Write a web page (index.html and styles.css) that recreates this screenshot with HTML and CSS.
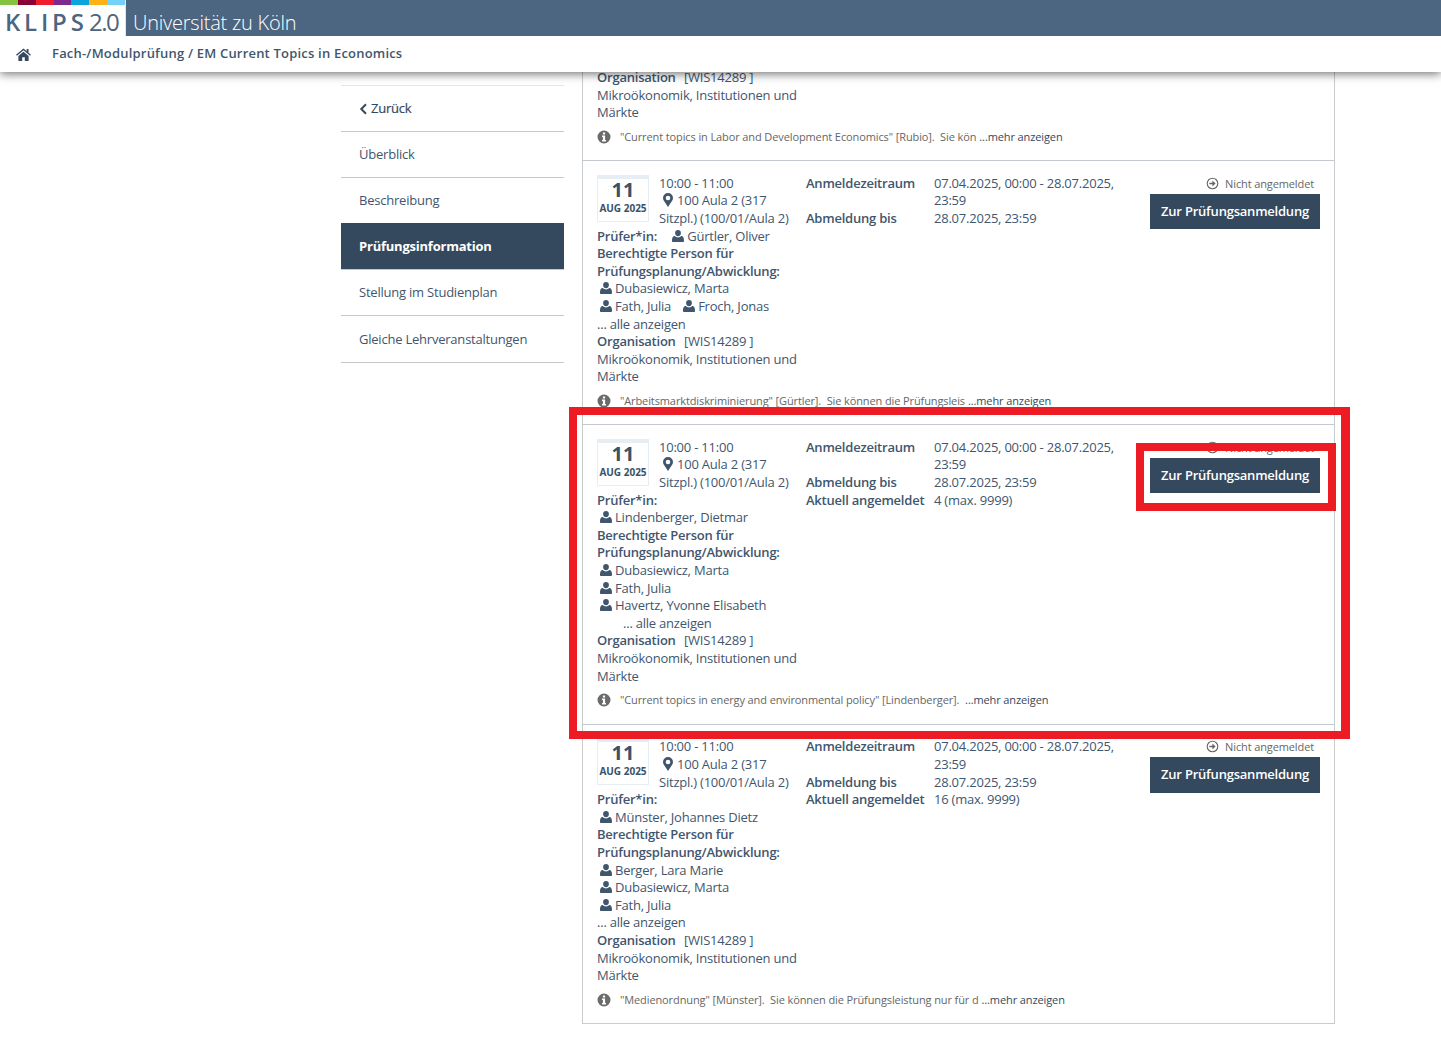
FILE: index.html
```html
<!DOCTYPE html>
<html lang="de">
<head>
<meta charset="utf-8">
<title>Fach-/Modulprüfung</title>
<link rel="stylesheet" href="styles.css">
</head>
<body>
<svg class="defs" aria-hidden="true">
  <symbol id="i-user" viewBox="0 0 12 12"><ellipse cx="6" cy="3.100" rx="2.900" ry="3.100"/><path d="M1 12c-.6 0-1-.4-1-1 0-2.400.6-4.900 2.700-4.900.8.800 2 1.300 3.300 1.300s2.500-.5 3.300-1.300c2.100 0 2.700 2.500 2.700 4.900 0 .6-.4 1-1 1z"/></symbol>
  <symbol id="i-marker" viewBox="0 0 10 14"><path fill-rule="evenodd" d="M5 0A5 5 0 0 0 0 5c0 1 .3 1.600.7 2.400L5 14l4.300-6.600c.4-.8.7-1.400.7-2.400a5 5 0 0 0-5-5zm0 7.300a2.300 2.300 0 1 1 0-4.600 2.300 2.300 0 0 1 0 4.600z"/></symbol>
  <symbol id="i-info" viewBox="0 0 14 14"><path fill-rule="evenodd" d="M7 .5a6.500 6.500 0 1 0 0 13 6.500 6.500 0 0 0 0-13zM5.900 2.600h2.200v1.900H5.900zM5 5.600h3.100v4.500h.9v1.400H5v-1.400h.9V7H5z"/></symbol>
  <symbol id="i-go" viewBox="0 0 14 14"><circle cx="7" cy="7" r="5.700" fill="none" stroke="currentColor" stroke-width="1.200"/><path d="M3.600 6.100h3.300V3.900L10.300 7 6.900 10.100V7.900H3.600z"/></symbol>
</svg>

<header class="top">
  <div class="brandbar">
    <div class="logo">
      <div class="stripes"><i class="s1"></i><i class="s2"></i><i class="s3"></i><i class="s4"></i><i class="s5"></i><i class="s6"></i><i class="s7"></i></div>
      <div class="logotext"><span class="klips">KLIPS</span><span class="ver">2.0</span></div>
    </div>
    <div class="uni">Universität zu Köln</div>
  </div>
  <div class="crumb">
    <svg class="home" viewBox="0 0 16 14"><path d="M8 .6 0 7.300l.9 1.100L8 2.500l7.100 5.900.9-1.100-2.600-2.200V1.200h-2v2.400zM2.500 8.600V14h4.100V9.900h2.800V14h4.100V8.600L8 4z"/></svg>
    <span class="crumbtext">Fach-/Modulprüfung / EM Current Topics in Economics</span>
  </div>
</header>

<div class="layout">
  <nav class="side">
    <a class="navitem back"><svg class="chev" viewBox="0 0 8 12"><path d="M6.300.6 7.700 2 3.700 6l4 4-1.400 1.400L.9 6z"/></svg>Zurück</a>
    <a class="navitem">Überblick</a>
    <a class="navitem">Beschreibung</a>
    <a class="navitem active">Prüfungsinformation</a>
    <a class="navitem">Stellung im Studienplan</a>
    <a class="navitem">Gleiche Lehrveranstaltungen</a>
  </nav>

  <main class="card">
    <section class="row rowclipped">
      <div class="left">
        <div><b class="org">Organisation</b> &nbsp;[WIS14289 ]</div>
        <div>Mikroökonomik, Institutionen und Märkte</div>
      </div>
      <p class="note"><svg class="ic-info"><use href="#i-info"/></svg><span>"Current topics in Labor and Development Economics" [Rubio]. &nbsp;Sie kön</span> <a>...mehr anzeigen</a></p>
    </section>

    <section class="row">
      <div class="cols">
        <div class="left">
          <div class="date"><strong>11</strong><small>AUG 2025</small></div>
          <div class="timeplace">10:00 - 11:00<br><svg class="ic-marker"><use href="#i-marker"/></svg>100 Aula 2 (317 Sitzpl.) (100/01/Aula 2)</div>
          <div><b class="examiner">Prüfer*in:</b> <span class="person gap"><svg class="ic-user"><use href="#i-user"/></svg>Gürtler, Oliver</span></div>
          <div><b>Berechtigte Person für Prüfungsplanung/Abwicklung:</b></div>
          <div><span class="person"><svg class="ic-user"><use href="#i-user"/></svg>Dubasiewicz, Marta</span></div>
          <div><span class="person"><svg class="ic-user"><use href="#i-user"/></svg>Fath, Julia</span><span class="person gap"><svg class="ic-user"><use href="#i-user"/></svg>Froch, Jonas</span></div>
          <div>... alle anzeigen</div>
          <div><b class="org">Organisation</b> &nbsp;[WIS14289 ]</div>
          <div>Mikroökonomik, Institutionen und Märkte</div>
        </div>
        <dl class="mid">
          <dt>Anmeldezeitraum</dt><dd>07.04.2025, 00:00 - 28.07.2025, 23:59</dd>
          <dt>Abmeldung bis</dt><dd>28.07.2025, 23:59</dd>
        </dl>
        <div class="right">
          <div class="status"><svg class="ic-go"><use href="#i-go"/></svg>Nicht angemeldet</div>
          <a class="btn">Zur Prüfungsanmeldung</a>
        </div>
      </div>
      <p class="note"><svg class="ic-info"><use href="#i-info"/></svg><span>"Arbeitsmarktdiskriminierung" [Gürtler]. &nbsp;Sie können die Prüfungsleis</span> <a>...mehr anzeigen</a></p>
    </section>

    <section class="row marked">
      <div class="cols">
        <div class="left">
          <div class="date"><strong>11</strong><small>AUG 2025</small></div>
          <div class="timeplace">10:00 - 11:00<br><svg class="ic-marker"><use href="#i-marker"/></svg>100 Aula 2 (317 Sitzpl.) (100/01/Aula 2)</div>
          <div><b>Prüfer*in:</b></div>
          <div><span class="person"><svg class="ic-user"><use href="#i-user"/></svg>Lindenberger, Dietmar</span></div>
          <div><b>Berechtigte Person für Prüfungsplanung/Abwicklung:</b></div>
          <div><span class="person"><svg class="ic-user"><use href="#i-user"/></svg>Dubasiewicz, Marta</span></div>
          <div><span class="person"><svg class="ic-user"><use href="#i-user"/></svg>Fath, Julia</span></div>
          <div><span class="person"><svg class="ic-user"><use href="#i-user"/></svg>Havertz, Yvonne Elisabeth</span></div>
          <div class="indent">... alle anzeigen</div>
          <div><b class="org">Organisation</b> &nbsp;[WIS14289 ]</div>
          <div>Mikroökonomik, Institutionen und Märkte</div>
        </div>
        <dl class="mid">
          <dt>Anmeldezeitraum</dt><dd>07.04.2025, 00:00 - 28.07.2025, 23:59</dd>
          <dt>Abmeldung bis</dt><dd>28.07.2025, 23:59</dd>
          <dt>Aktuell angemeldet</dt><dd>4 (max. 9999)</dd>
        </dl>
        <div class="right">
          <div class="status"><svg class="ic-go"><use href="#i-go"/></svg>Nicht angemeldet</div>
          <a class="btn btn-marked">Zur Prüfungsanmeldung</a>
        </div>
      </div>
      <p class="note"><svg class="ic-info"><use href="#i-info"/></svg><span>"Current topics in energy and environmental policy" [Lindenberger]. </span> <a>...mehr anzeigen</a></p>
    </section>

    <section class="row lastrow">
      <div class="cols">
        <div class="left">
          <div class="date"><strong>11</strong><small>AUG 2025</small></div>
          <div class="timeplace">10:00 - 11:00<br><svg class="ic-marker"><use href="#i-marker"/></svg>100 Aula 2 (317 Sitzpl.) (100/01/Aula 2)</div>
          <div><b>Prüfer*in:</b></div>
          <div><span class="person"><svg class="ic-user"><use href="#i-user"/></svg>Münster, Johannes Dietz</span></div>
          <div><b>Berechtigte Person für Prüfungsplanung/Abwicklung:</b></div>
          <div><span class="person"><svg class="ic-user"><use href="#i-user"/></svg>Berger, Lara Marie</span></div>
          <div><span class="person"><svg class="ic-user"><use href="#i-user"/></svg>Dubasiewicz, Marta</span></div>
          <div><span class="person"><svg class="ic-user"><use href="#i-user"/></svg>Fath, Julia</span></div>
          <div>... alle anzeigen</div>
          <div><b class="org">Organisation</b> &nbsp;[WIS14289 ]</div>
          <div>Mikroökonomik, Institutionen und Märkte</div>
        </div>
        <dl class="mid">
          <dt>Anmeldezeitraum</dt><dd>07.04.2025, 00:00 - 28.07.2025, 23:59</dd>
          <dt>Abmeldung bis</dt><dd>28.07.2025, 23:59</dd>
          <dt>Aktuell angemeldet</dt><dd>16 (max. 9999)</dd>
        </dl>
        <div class="right">
          <div class="status"><svg class="ic-go"><use href="#i-go"/></svg>Nicht angemeldet</div>
          <a class="btn">Zur Prüfungsanmeldung</a>
        </div>
      </div>
      <p class="note"><svg class="ic-info"><use href="#i-info"/></svg><span>"Medienordnung" [Münster]. &nbsp;Sie können die Prüfungsleistung nur für d</span> <a>...mehr anzeigen</a></p>
    </section>
  </main>
</div>
</body>
</html>
```

FILE: styles.css
```css
* { box-sizing: border-box; }
html, body { margin: 0; padding: 0; background: #fff; }
body {
  font-family: "Open Sans", sans-serif;
  font-size: 13px;
  line-height: 17.6px;
  letter-spacing: -.22px;
  color: #3f566e;
  min-height: 1039px;
}
.defs { display: none; }
svg { fill: currentColor; }

/* header */
.top {
  position: relative;
  z-index: 5;
  height: 72px;
  background: #fff;
  box-shadow: 0 2px 9px rgba(0, 0, 0, .55);
}
.brandbar {
  height: 36px;
  background: #4c6580;
  display: flex;
  align-items: stretch;
}
.logo {
  width: 126px;
  background: #fff;
  border-right: 1px solid #dfe6ec;
  display: flex;
  flex-direction: column;
}
.stripes { display: flex; height: 5px; flex: none; }
.stripes i { flex: 1; }
.s1 { background: #84c341; }
.s2 { background: #8a0034; }
.s3 { background: #ee1c2e; }
.s4 { background: #7d2a90; }
.s5 { background: #0aa5dd; }
.s6 { background: #fdb216; }
.s7 { background: #73d2f7; }
.logotext {
  display: flex;
  align-items: baseline;
  padding: 3px 0 0 5px;
  color: #4c6580;
  font-size: 24px;
  line-height: 28px;
  white-space: nowrap;
}
.klips {
  width: 84px;
  flex: none;
  font-weight: 600;
  letter-spacing: 3.800px;
}
.ver {
  font-weight: 400;
  letter-spacing: -1.500px;
}
.uni {
  color: #fff;
  font-size: 20px;
  font-weight: 300;
  line-height: 26px;
  padding: 10px 0 0 7px;
  white-space: nowrap;
}
.crumb {
  height: 36px;
  display: flex;
  align-items: center;
  padding-left: 16px;
}
.home { width: 15px; height: 13px; color: #34495e; margin-right: 21px; }
.crumbtext { font-weight: 600; letter-spacing: .2px; }

/* layout */
.layout {
  display: flex;
  align-items: flex-start;
  gap: 18px;
  padding-left: 341px;
  margin-top: -3px;
}
.side {
  width: 223px;
  margin-top: 16px;
  border-top: 1px solid #e6e6e6;
}
.navitem {
  display: flex;
  align-items: center;
  height: 46px;
  padding-left: 18px;
  border-bottom: 1px solid #c8c8c8;
  white-space: nowrap;
}
.navitem:last-child { height: 47px; padding-top: 2px; }
.back { color: #34495e; -webkit-text-stroke: .2px #34495e; }
.chev { width: 8px; height: 12px; margin-right: 4px; color: #34495e; }
.active {
  height: 47px;
  margin-top: -1px;
  padding-top: 1px;
  background: #34495e;
  color: #fff;
  font-weight: 700;
}

/* card */
.card {
  width: 753px;
  border: 1px solid #c8ccd0;
  border-top: 0;
}
.row {
  padding: 13.900px 14px 0;
  border-bottom: 1px solid #c3c9cf;
  height: 264px;
}
.rowclipped { padding-top: 0; height: 92px; }
.rowclipped .left { width: 209px; }
.marked { height: 300px; position: relative; }
.lastrow { height: 298px; border-bottom: 0; padding-top: 13.400px; }
.marked::after {
  content: "";
  position: absolute;
  inset: -18px -16px -15px -14px;
  border: 8px solid #ed1c24;
  border-right-width: 9px;
  pointer-events: none;
  z-index: 2;
}
.cols { display: flex; }
.left { width: 209px; flex: none; }
.left b, dt { font-weight: 600; }
.org { margin-right: 2px; }
.date {
  float: left;
  width: 52px;
  height: 47px;
  margin-right: 10px;
  border: 1px solid #e6edf3;
  border-top: 4px solid #e6edf3;
  text-align: center;
  color: #3b5168;
  letter-spacing: 0;
}
.date strong { display: block; font-size: 20px; line-height: 22px; font-weight: 700; }
.date small { display: block; font-size: 10px; line-height: 15px; font-weight: 700; white-space: nowrap; margin: 0 -2px; }
.timeplace { min-height: 52.800px; }
.ic-marker { width: 10px; height: 14px; margin: 0 4px; vertical-align: -2px; }
.ic-user { width: 12px; height: 12px; margin: 0 3px; vertical-align: -1px; }
.person { white-space: nowrap; }
.gap { margin-left: 9px; }
.indent { padding-left: 26px; }
.mid {
  flex: none;
  width: 330px;
  margin: 0;
  display: grid;
  grid-template-columns: 128px 190px;
  align-content: start;
}
dd { margin: 0; }
.right {
  flex: 1;
  display: flex;
  flex-direction: column;
  align-items: flex-end;
}
.status {
  font-size: 11px;
  line-height: 17.600px;
  letter-spacing: -.12px;
  color: #666;
  padding-right: 6px;
  white-space: nowrap;
}
.ic-go { width: 13px; height: 13px; margin-right: 6px; vertical-align: -2px; }
.btn {
  display: flex;
  align-items: center;
  justify-content: center;
  width: 170px;
  height: 35.600px;
  margin-top: 1.400px;
  background: #34495e;
  color: #fff;
  font-weight: 600;
  white-space: nowrap;
}
.btn-marked { position: relative; }
.btn-marked::after {
  content: "";
  position: absolute;
  inset: -15px -16px -18px -14px;
  border: 8px solid #ed1c24;
  z-index: 3;
}
.note {
  margin: 6px 0 0;
  font-size: 11px;
  line-height: 17.600px;
  letter-spacing: -.11px;
  color: #666;
  clear: both;
  white-space: nowrap;
  display: flex;
  align-items: center;
}
.note span { white-space: pre-wrap; }
.note a { color: #34495e; margin-left: 3px; }
.ic-info { width: 14px; height: 14px; color: #6b6b6b; margin-right: 9px; flex: none; }
```
